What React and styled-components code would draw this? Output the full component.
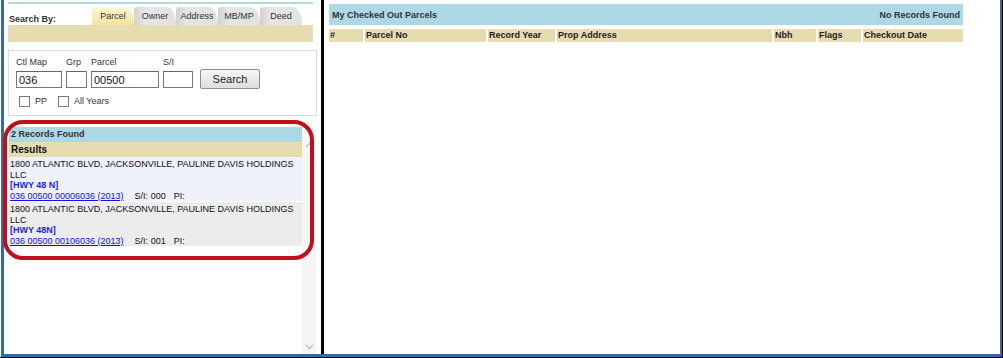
import styled, { createGlobalStyle } from "styled-components";

const GlobalStyle = createGlobalStyle`
  html, body {
    margin: 0;
    padding: 0;
    background: #fff;
  }
  body {
    font-family: "Liberation Sans", Arial, sans-serif;
    color: #222;
  }
`;

const tabs = ["Parcel", "Owner", "Address", "MB/MP", "Deed"];

const results = [
  { addr: "1800 ATLANTIC BLVD, JACKSONVILLE, PAULINE DAVIS HOLDINGS LLC", hwy: "[HWY 48 N]", parcel: "036 00500 00006036 (2013)", si: "000", alt: false },
  { addr: "1800 ATLANTIC BLVD, JACKSONVILLE, PAULINE DAVIS HOLDINGS LLC", hwy: "[HWY 48N]", parcel: "036 00500 00106036 (2013)", si: "001", alt: true },
];

const columns = [
  { label: "#", w: 34 },
  { label: "Parcel No", w: 121 },
  { label: "Record Year", w: 67 },
  { label: "Prop Address", w: 215 },
  { label: "Nbh", w: 42 },
  { label: "Flags", w: 43 },
  { label: "Checkout Date", w: 100 },
];

const App = () => {
  return (
    <>
      <GlobalStyle />
      <Frame>
        <Window>
          <LeftPanel>
            <TopLine />
            <SearchHead>
              <SearchByLabel>Search By:</SearchByLabel>
              <TabRow>
                {tabs.map((t, i) => (
                  <Tab key={t} $active={i === 0}>{t}</Tab>
                ))}
              </TabRow>
            </SearchHead>
            <TanBar />

            <SearchBox>
              <FieldRow>
                <Field>
                  <FieldLabel>Ctl Map</FieldLabel>
                  <TextInput $w={46} defaultValue="036" />
                </Field>
                <Field>
                  <FieldLabel>Grp</FieldLabel>
                  <TextInput $w={21} defaultValue="" />
                </Field>
                <Field>
                  <FieldLabel>Parcel</FieldLabel>
                  <TextInput $w={68} defaultValue="00500" />
                </Field>
                <Field>
                  <FieldLabel>S/I</FieldLabel>
                  <TextInput $w={30} defaultValue="" />
                </Field>
                <SearchButton>Search</SearchButton>
              </FieldRow>
              <CheckRow>
                <CheckLabel>
                  <Check type="checkbox" />
                  PP
                </CheckLabel>
                <CheckLabel>
                  <Check type="checkbox" />
                  All Years
                </CheckLabel>
              </CheckRow>
            </SearchBox>

            <ResultsArea>
              <ResultsList>
                <RecordsHeader>2 Records Found</RecordsHeader>
                <ResultsHeader>Results</ResultsHeader>
                {results.map((r, i) => (
                  <ResultItem key={i} $alt={r.alt}>
                    <div>{r.addr}</div>
                    <Hwy>{r.hwy}</Hwy>
                    <div>
                      <ParcelLink href="#">{r.parcel}</ParcelLink>
                      <Meta>S/I: {r.si}</Meta>
                      <Meta>PI:</Meta>
                    </div>
                  </ResultItem>
                ))}
              </ResultsList>
              <ScrollBar>
                <svg width="9" height="6" viewBox="0 0 9 6">
                  <polyline points="1,5 4.5,1.5 8,5" fill="none" stroke="#c4c4c4" strokeWidth="1.6" />
                </svg>
                <svg width="9" height="6" viewBox="0 0 9 6">
                  <polyline points="1,1 4.5,4.5 8,1" fill="none" stroke="#c4c4c4" strokeWidth="1.6" />
                </svg>
              </ScrollBar>
            </ResultsArea>

            <Highlight />
          </LeftPanel>

          <Divider />

          <RightPanel>
            <CheckedHeader>
              <span>My Checked Out Parcels</span>
              <span>No Records Found</span>
            </CheckedHeader>
            <HeadRow>
              {columns.map((c) => (
                <HeadCell key={c.label} $w={c.w}>{c.label}</HeadCell>
              ))}
            </HeadRow>
          </RightPanel>
        </Window>
      </Frame>
    </>
  );
};
export default App;

const Frame = styled.div`
  width: 1003px;
  height: 358px;
  box-sizing: border-box;
  padding-left: 1px;
  border-right: 1px solid #000;
  border-bottom: 1px solid #000;
  background: #fff;
`;

const Window = styled.div`
  height: 100%;
  box-sizing: border-box;
  display: flex;
  border-left: 3px solid #3a69a2;
  border-right: 2px solid #3a69a2;
  border-bottom: 3px solid #3a69a2;
`;

const LeftPanel = styled.div`
  position: relative;
  width: 317px;
  box-sizing: border-box;
  padding-left: 4px;
  display: flex;
  flex-direction: column;
`;

const TopLine = styled.div`
  margin-top: 2px;
  width: 305px;
  height: 2px;
  background: #add8e6;
`;

const SearchHead = styled.div`
  display: flex;
  margin-top: 3px;
  height: 18px;
`;

const SearchByLabel = styled.div`
  width: 84px;
  align-self: flex-end;
  padding-left: 1px;
  box-sizing: border-box;
  font-size: 9px;
  line-height: 11px;
  font-weight: bold;
  color: #333;
`;

const TabRow = styled.div`
  display: flex;
`;

const Tab = styled.div`
  width: 42px;
  height: 18px;
  text-align: center;
  font-size: 9px;
  line-height: 18px;
  color: #333;
  border-radius: 3px 10px 0 0 / 3px 16px 0 0;
  background: ${(p) =>
    p.$active
      ? "linear-gradient(#fdf7d6, #f3e39c)"
      : "linear-gradient(90deg, #d2d2d2 0%, #e6e6e6 25%, #e2e2e2 100%)"};
`;

const TanBar = styled.div`
  width: 305px;
  height: 17px;
  background: #e6dcb0;
`;

const SearchBox = styled.div`
  margin-top: 8px;
  width: 309px;
  height: 66px;
  box-sizing: border-box;
  border: 1px solid #dcdcdc;
  padding: 6px 0 0 7px;
`;

const FieldRow = styled.div`
  display: flex;
  align-items: flex-end;
  gap: 4px;
`;

const Field = styled.div`
  display: flex;
  flex-direction: column;
`;

const FieldLabel = styled.div`
  font-size: 9px;
  line-height: 11px;
  height: 11px;
  color: #333;
  margin-bottom: 3px;
`;

const TextInput = styled.input`
  width: ${(p) => p.$w}px;
  height: 17px;
  box-sizing: border-box;
  margin: 0;
  padding: 0 2px;
  border: 1px solid #777;
  border-top-color: #666;
  font-family: "Liberation Sans", Arial, sans-serif;
  font-size: 11px;
  color: #111;
  background: #fff;
  outline: none;
`;

const SearchButton = styled.button`
  margin: 0 0 -1px 3px;
  width: 60px;
  height: 20px;
  box-sizing: border-box;
  padding: 0;
  border: 1px solid #8e8e8e;
  border-radius: 2px;
  background: linear-gradient(#f7f7f7, #dedede);
  font-family: "Liberation Sans", Arial, sans-serif;
  font-size: 11px;
  color: #222;
`;

const CheckRow = styled.div`
  display: flex;
  gap: 11px;
  margin: 8px 0 0 3px;
`;

const CheckLabel = styled.label`
  display: flex;
  align-items: center;
  gap: 5px;
  font-size: 9px;
  line-height: 11px;
  color: #333;
`;

const Check = styled.input`
  appearance: none;
  margin: 0;
  width: 11px;
  height: 11px;
  box-sizing: border-box;
  border: 1px solid #777;
  background: #fff;
`;

const ResultsArea = styled.div`
  flex: 1;
  min-height: 0;
  display: flex;
  margin: 11px 0 0 1px;
`;

const ResultsList = styled.div`
  width: 293px;
  display: flex;
  flex-direction: column;
`;

const RecordsHeader = styled.div`
  height: 15px;
  line-height: 15px;
  padding-left: 2px;
  background: #add8e6;
  font-size: 9px;
  font-weight: bold;
  color: #333;
`;

const ResultsHeader = styled.div`
  height: 15px;
  line-height: 15px;
  padding-left: 2px;
  background: #e6dcb0;
  font-size: 10px;
  font-weight: bold;
  color: #111;
`;

const ResultItem = styled.div`
  margin-bottom: 1px;
  padding: 2px 1px 0 1px;
  height: 44px;
  box-sizing: border-box;
  background: ${(p) => (p.$alt ? "#ececec" : "#eef0fa")};
  font-size: 9px;
  line-height: 10.5px;
  color: #111;
`;

const Hwy = styled.div`
  font-weight: bold;
  color: #1f1fe0;
`;

const ParcelLink = styled.a`
  color: #1010e8;
  text-decoration: underline;
`;

const Meta = styled.span`
  margin-left: 11px;
  &:last-child {
    margin-left: 8px;
  }
`;

const ScrollBar = styled.div`
  width: 14px;
  background: #f5f5f5;
  display: flex;
  flex-direction: column;
  justify-content: space-between;
  align-items: center;
  padding: 15px 0 4px;
  box-sizing: border-box;
`;

const Highlight = styled.div`
  position: absolute;
  left: -1px;
  top: 120px;
  width: 311px;
  height: 140px;
  box-sizing: border-box;
  border: 4px solid #bf0f1c;
  border-radius: 20px;
  pointer-events: none;
`;

const Divider = styled.div`
  width: 3px;
  background: #000;
`;

const RightPanel = styled.div`
  flex: 1;
  padding: 4px 0 0 5px;
`;

const CheckedHeader = styled.div`
  width: 634px;
  height: 21px;
  box-sizing: border-box;
  padding: 0 3px;
  display: flex;
  justify-content: space-between;
  align-items: center;
  background: #add8e6;
  font-size: 9px;
  font-weight: bold;
  color: #333;
`;

const HeadRow = styled.div`
  display: flex;
  gap: 2px;
  margin-top: 4px;
`;

const HeadCell = styled.div`
  width: ${(p) => p.$w}px;
  height: 13px;
  line-height: 13px;
  padding-left: 1px;
  box-sizing: border-box;
  background: #e6dcb0;
  font-size: 9px;
  font-weight: bold;
  color: #222;
`;
